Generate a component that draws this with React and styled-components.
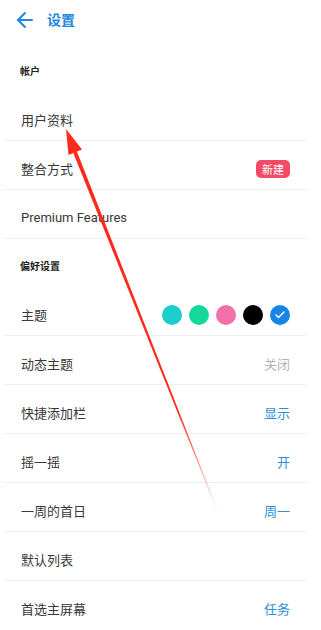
import React from "react";
import styled, { createGlobalStyle } from "styled-components";
import { ArrowLeft, Check } from "lucide-react";

const GlobalStyle = createGlobalStyle`
  html, body {
    margin: 0;
    padding: 0;
    background: #ffffff;
  }
  body {
    font-family: Roboto, "Noto Sans CJK SC", sans-serif;
    -webkit-font-smoothing: antialiased;
  }
`;

const Page = styled.div`
  position: relative;
  width: 321px;
  height: 630px;
  overflow: hidden;
  background: #fff;
`;

const Header = styled.div`
  display: flex;
  align-items: center;
  height: 44px;
  padding: 0 0 4px 13px;
  box-sizing: border-box;
  color: #1e88e0;
  svg {
    flex-shrink: 0;
  }
`;

const Title = styled.h1`
  margin: 0 0 0 10px;
  font-size: 14px;
  font-weight: 700;
  line-height: 1;
`;

const List = styled.div`
  display: flex;
  flex-direction: column;
  width: 304px;
  margin-left: 3px;
`;

const SectionLabel = styled.div`
  height: 48px;
  box-sizing: border-box;
  padding: 22px 0 0 17px;
  font-size: 10px;
  line-height: 12px;
  font-weight: 700;
  color: #222;
`;

const Row = styled.div`
  display: flex;
  align-items: center;
  justify-content: space-between;
  height: 49px;
  box-sizing: border-box;
  padding: 7px 17px 0 18px;
  border-bottom: 1px solid ${(p) => (p.$last ? "transparent" : "#f0f0f0")};
`;

const Label = styled.span`
  font-size: 13px;
  color: #383838;
`;

const Value = styled.span`
  font-size: 13px;
  color: ${(p) => (p.$muted ? "#b3b3b3" : "#2e8fd8")};
`;

const Badge = styled.span`
  display: inline-flex;
  align-items: center;
  height: 18px;
  padding: 0 6px;
  border-radius: 5px;
  background: #f34a66;
  color: #fff;
  font-size: 11px;
`;

const Swatches = styled.div`
  display: flex;
  gap: 7px;
`;

const Swatch = styled.span`
  display: flex;
  align-items: center;
  justify-content: center;
  width: 20px;
  height: 20px;
  border-radius: 50%;
  background: ${(p) => p.$color};
`;

const Overlay = styled.svg`
  position: absolute;
  left: 0;
  top: 0;
  pointer-events: none;
`;

const colors = ["#1bcdcd", "#14d79b", "#f271aa", "#000000", "#1784e8"];

const RedArrow = () => (
  <Overlay width="321" height="630" viewBox="0 0 321 630">
    <defs>
      <linearGradient id="fade" x1="75" y1="152" x2="218" y2="512" gradientUnits="userSpaceOnUse">
        <stop offset="0" stopColor="#ff2a1c" />
        <stop offset="0.72" stopColor="#ff2a1c" />
        <stop offset="1" stopColor="#ff2a1c" stopOpacity="0" />
      </linearGradient>
    </defs>
    <polygon points="73.2,152.7 76.8,151.3 218.4,511.8 217.6,512.2" fill="url(#fade)" />
    <polygon points="66,129 82,149.6 68.5,155" fill="#ff2a1c" />
  </Overlay>
);

export default function App() {
  return (
    <Page>
      <GlobalStyle />
      <Header>
        <ArrowLeft size={24} strokeWidth={2} />
        <Title>设置</Title>
      </Header>
      <List>
        <SectionLabel>帐户</SectionLabel>
        <Row>
          <Label>用户资料</Label>
        </Row>
        <Row>
          <Label>整合方式</Label>
          <Badge>新建</Badge>
        </Row>
        <Row>
          <Label>Premium Features</Label>
        </Row>
        <SectionLabel>偏好设置</SectionLabel>
        <Row>
          <Label>主题</Label>
          <Swatches>
            {colors.map((c, i) => (
              <Swatch key={c} $color={c}>
                {i === colors.length - 1 && <Check size={12} color="#fff" strokeWidth={3} />}
              </Swatch>
            ))}
          </Swatches>
        </Row>
        <Row>
          <Label>动态主题</Label>
          <Value $muted>关闭</Value>
        </Row>
        <Row>
          <Label>快捷添加栏</Label>
          <Value>显示</Value>
        </Row>
        <Row>
          <Label>摇一摇</Label>
          <Value>开</Value>
        </Row>
        <Row>
          <Label>一周的首日</Label>
          <Value>周一</Value>
        </Row>
        <Row>
          <Label>默认列表</Label>
        </Row>
        <Row $last>
          <Label>首选主屏幕</Label>
          <Value>任务</Value>
        </Row>
      </List>
      <RedArrow />
    </Page>
  );
}
